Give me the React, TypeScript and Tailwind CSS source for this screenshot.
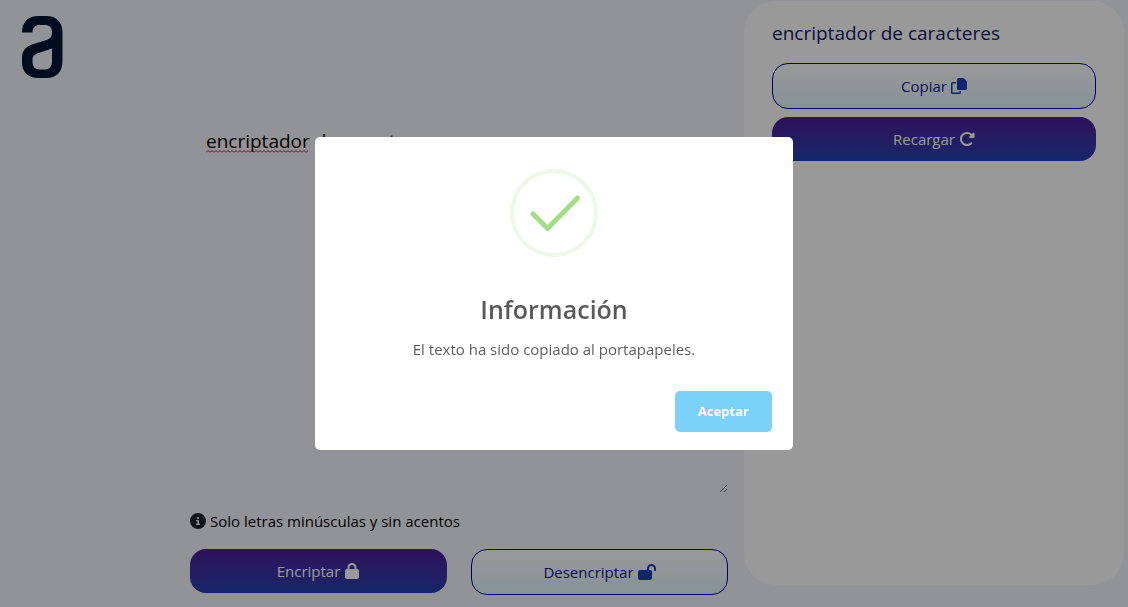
import { useState } from "react";
import { FaCircleInfo, FaLock, FaLockOpen, FaRotateRight } from "react-icons/fa6";

const primaryButton =
  "flex h-11 w-full items-center justify-center gap-1 rounded-2xl bg-linear-to-b from-[#4c1d95] to-[#1e40af] text-white";
const outlineButton =
  "flex h-[46px] w-full items-center justify-center gap-1 rounded-2xl border border-[#0000a8] bg-linear-to-b from-white to-[#dff3fc] text-[#14109a]";

function Logo() {
  return (
    <svg viewBox="0 0 42 62" className="h-[62px] w-[42px]" role="img" aria-label="Logo">
      <path
        fill="#001633"
        d="M1 16.500 C1 6 7 0 17.500 0 H25 C35.500 0 41.500 6 41.500 16.500 V45 C41.500 56 35.500 62 25 62 H17.500 C7 62 1 56 1 46 V42.500 C1 34.500 4.500 30.500 12.500 28 L24 24.500 C29 23 31 21 31 17 V16 C31 11.500 28.500 9 24 9 H18.500 C14 9 11.500 11.500 11.500 16.500 Z M31 32.500 L17.500 37 C13 38.500 11.500 40.500 11.500 44.500 V45.500 C11.500 50.500 14 53.500 18.500 53.500 H24 C28.500 53.500 31 50.500 31 45.500 Z"
      />
    </svg>
  );
}

function CopyIcon() {
  return (
    <svg viewBox="0 0 16 16" className="size-4 fill-blue-800" aria-hidden="true">
      <path d="M7.500 0 H12.400 L16 3.200 V10.500 A1.500 1.500 0 0 1 14.500 12 H7.500 A1.500 1.500 0 0 1 6 10.500 V1.500 A1.500 1.500 0 0 1 7.500 0 Z" />
      <path d="M2 4 H5 V5.400 H1.500 V14.500 H8.500 V13 H10 V14.500 A1.500 1.500 0 0 1 8.500 16 H1.500 A1.500 1.500 0 0 1 0 14.500 V5.500 A1.500 1.500 0 0 1 1.500 4 Z" />
    </svg>
  );
}

function Editor() {
  const [text, setText] = useState("encriptador de caracteres");
  return (
    <div className="relative flex flex-1">
      <div aria-hidden="true" className="pointer-events-none absolute inset-0 p-4">
        <svg className="mt-[22px] h-[3px] w-[102px]" fill="none" stroke="#e00000">
          <defs>
            <pattern id="wave" width="4" height="3" patternUnits="userSpaceOnUse">
              <path d="M0 2.500 L2 0.500 L4 2.500" />
            </pattern>
          </defs>
          <rect width="102" height="3" fill="url(#wave)" stroke="none" />
        </svg>
      </div>
      <textarea
        aria-label="Texto"
        spellCheck={false}
        value={text}
        onChange={(event) => setText(event.target.value)}
        className="w-full resize bg-transparent px-4 py-[15px] text-[19px] leading-7 text-black outline-none"
      />
    </div>
  );
}

function SuccessDialog({ onClose }: { onClose: () => void }) {
  return (
    <div className="fixed inset-0 flex items-center justify-center bg-black/40 pr-5 pb-5">
      <div
        role="dialog"
        aria-modal="true"
        aria-labelledby="dialog-title"
        className="flex w-[478px] flex-col items-center rounded-[5px] bg-white pt-8"
      >
        <svg viewBox="0 0 88 88" className="size-[88px]" fill="none" aria-hidden="true">
          <circle cx="44" cy="44" r="42" stroke="#edf8e7" strokeWidth="4" />
          <path
            d="M23 45 L37.500 59.500 L67.500 29"
            stroke="#a5dc86"
            strokeWidth="5"
            strokeLinecap="round"
            strokeLinejoin="round"
          />
        </svg>
        <h2 id="dialog-title" className="mt-8 text-[25px] leading-10 font-semibold text-black/65">
          Información
        </h2>
        <p className="mt-2 text-[15px] leading-6 text-black/65">El texto ha sido copiado al portapapeles.</p>
        <div className="mt-4 flex w-full justify-end px-[21px] pt-[14px] pb-[18px]">
          <button
            type="button"
            onClick={onClose}
            className="rounded-[5px] bg-[#7cd1f9] px-[23px] py-2.5 text-[13px] leading-[21px] font-bold text-white"
          >
            Aceptar
          </button>
        </div>
      </div>
    </div>
  );
}

export default function App() {
  const [open, setOpen] = useState(true);
  return (
    <div className="flex min-h-screen bg-[#f3f5fc] pr-1 font-['Open_Sans','Noto_Sans',sans-serif]">
      <main className="flex flex-1 gap-[127px] pr-4 pb-3 pl-[21px]">
        <a href="#" className="mt-4 shrink-0 self-start">
          <Logo />
        </a>
        <div className="flex flex-1 flex-col pt-28">
          <Editor />
          <p className="mt-4 flex items-center gap-1 text-[15px] leading-6 text-black">
            <FaCircleInfo className="size-4 text-[#212529]" />
            Solo letras minúsculas y sin acentos
          </p>
          <div className="mt-4 grid grid-cols-2 items-start gap-6 text-[15px]">
            <button type="button" className={primaryButton}>
              Encriptar
              <FaLock className="size-4" />
            </button>
            <button type="button" className={outlineButton}>
              Desencriptar
              <FaLockOpen className="h-4 w-[18px] text-blue-800" />
            </button>
          </div>
        </div>
      </main>
      <aside className="mt-px mb-[22px] flex w-[380px] flex-col gap-2 rounded-[32px] bg-white px-7 pt-[18px] text-[15px]">
        <p className="mb-2 text-[19px] leading-7 text-[#14146e]">encriptador de caracteres</p>
        <button type="button" className={outlineButton} onClick={() => setOpen(true)}>
          Copiar
          <CopyIcon />
        </button>
        <button type="button" className={primaryButton}>
          Recargar
          <FaRotateRight className="size-4" />
        </button>
      </aside>
      {open && <SuccessDialog onClose={() => setOpen(false)} />}
    </div>
  );
}
